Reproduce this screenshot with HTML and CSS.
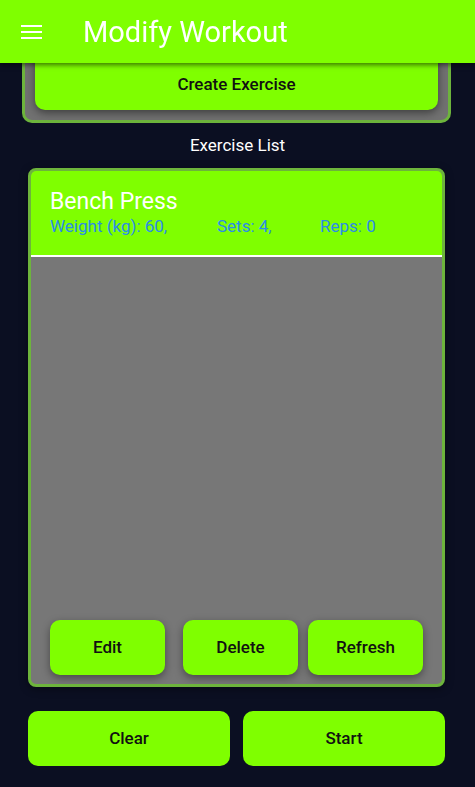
FILE: index.html
```html
<!DOCTYPE html>
<html>
<head>
<meta charset="utf-8">
<link rel="stylesheet" href="styles.css">
</head>
<body>
<header class="appbar">
  <svg class="menu" width="21" height="14" viewBox="0 0 21 14"><rect x="0" y="0" width="21" height="2" fill="#fff"/><rect x="0" y="6" width="21" height="2" fill="#fff"/><rect x="0" y="12" width="21" height="2" fill="#fff"/></svg>
  <h1 class="title">Modify Workout</h1>
</header>
<main class="content">
  <section class="create-card">
    <button class="btn create-btn">Create Exercise</button>
  </section>
  <div class="list-label">Exercise List</div>
  <section class="list-card">
    <div class="item">
      <div class="item-name">Bench Press</div>
      <div class="item-meta"><span class="m-weight">Weight (kg): 60,</span><span class="m-sets">Sets: 4,</span><span class="m-reps">Reps: 0</span></div>
    </div>
    <div class="list-body"></div>
    <div class="list-actions">
      <button class="btn act act-edit">Edit</button>
      <button class="btn act act-delete">Delete</button>
      <button class="btn act act-refresh">Refresh</button>
    </div>
  </section>
  <div class="bottom-actions">
    <button class="btn big">Clear</button>
    <button class="btn big">Start</button>
  </div>
</main>
</body>
</html>
```
FILE: styles.css
```css
* { box-sizing: border-box; }
html, body { margin: 0; padding: 0; }
body {
  width: 475px;
  height: 787px;
  overflow: hidden;
  background: #0b0f22;
  font-family: Roboto, "Liberation Sans", sans-serif;
}
.appbar {
  position: fixed;
  top: 0; left: 0;
  width: 475px;
  height: 63px;
  background: #7fff00;
  display: flex;
  align-items: center;
  z-index: 10;
  box-shadow: 0 2px 5px rgba(0,0,0,0.55);
}
.menu { margin-left: 21px; margin-top: 0px; }
.title {
  margin: 0 0 0 41px;
  font-weight: 400;
  font-size: 29px;
  color: #fff;
  line-height: 1;
  margin-top: 1px;
}
.content {
  display: flex;
  flex-direction: column;
  padding-top: 20px;
}
.create-card {
  margin: 0 24px 0 22px;
  border: 3px solid #6db43c;
  border-top: none;
  border-radius: 0 0 10px 10px;
  background: #717171;
  padding: 10px 10px 10px 10px;
}
.btn {
  font-family: Roboto, "Liberation Sans", sans-serif;
  background: #7fff00;
  border: none;
  color: #111;
  font-size: 17px;
  font-weight: 500;
  border-radius: 10px;
  padding: 0 0 2px 0;
}
.create-btn {
  width: 100%;
  height: 80px;
  padding: 27px 0 0 0;
  box-shadow: 0 3px 8px rgba(0,0,0,0.45);
}
.list-label {
  color: #fff;
  font-size: 17px;
  text-align: center;
  margin-top: 13px;
  height: 19px;
  line-height: 19px;
}
.list-card {
  margin: 13px 30px 0 28px;
  height: 519px;
  border: 3px solid #6db43c;
  border-radius: 8px;
  background: #777;
  display: flex;
  flex-direction: column;
  overflow: hidden;
  box-shadow: 0 2px 8px rgba(0,0,0,0.4);
}
.item {
  background: #7fff00;
  height: 86px;
  padding: 17px 0 0 19px;
  border-bottom: 2px solid #fff;
}
.item-name {
  color: #fff;
  font-size: 23px;
  line-height: 27px;
}
.item-meta {
  color: #2b8ce8;
  font-size: 17px;
  line-height: 20px;
  display: flex;
  margin-top: 1px;
}
.m-weight { width: 167px; }
.m-sets { width: 103px; }
.list-body { flex: 1; }
.list-actions {
  display: flex;
  padding: 0 0 9px 19px;
}
.act {
  width: 115px;
  height: 55px;
  box-shadow: 0 3px 8px rgba(0,0,0,0.4);
}
.act-delete { margin-left: 18px; }
.act-refresh { margin-left: 10px; }
.bottom-actions {
  display: flex;
  gap: 13px;
  margin: 24px 30px 0 28px;
}
.big {
  width: 202px;
  height: 55px;
}
```
